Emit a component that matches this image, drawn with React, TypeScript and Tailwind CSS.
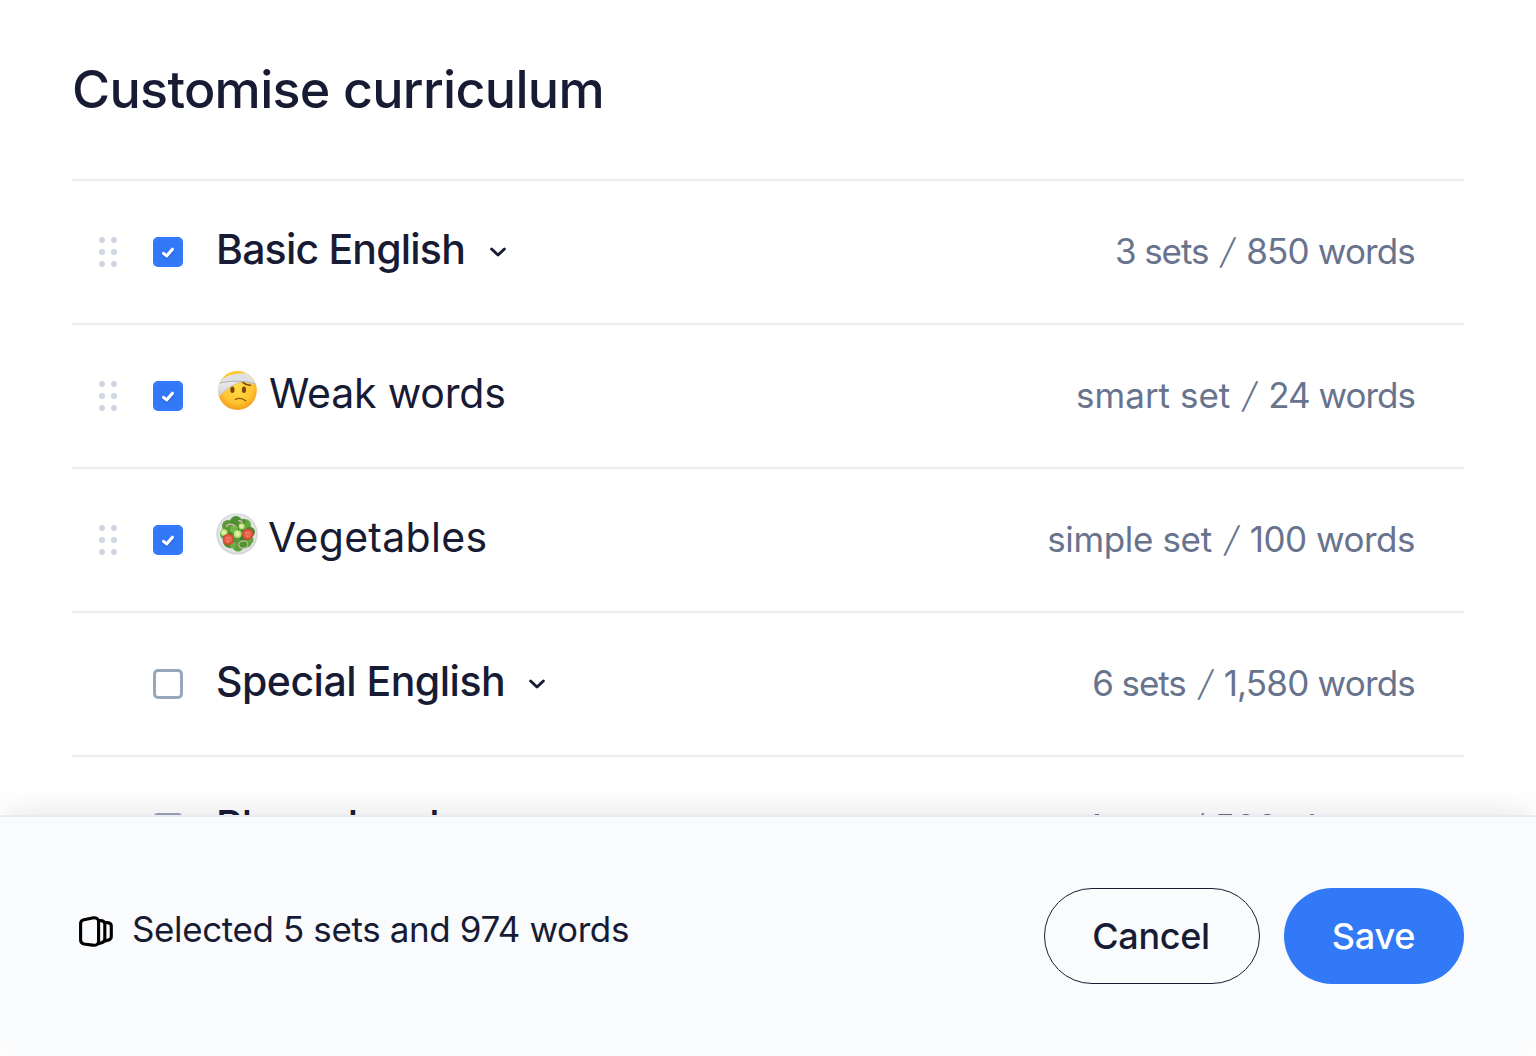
import type { ReactNode } from "react";

function Grip() {
  return (
    <svg width="20" height="32" viewBox="0 0 20 32" fill="#cfd6e2">
      {[4, 16, 28].map((y) => (
        <g key={y}>
          <circle cx="4" cy={y} r="3" />
          <circle cx="16" cy={y} r="3" />
        </g>
      ))}
    </svg>
  );
}

function Checkbox({ on }: { on: boolean }) {
  if (!on) {
    return <span className="block size-[30px] shrink-0 rounded-[5px] border-[3px] border-[#9aa6bc]" />;
  }
  return (
    <span className="block size-[30px] shrink-0 rounded-[5px] bg-[#3179f6]">
      <svg
        className="drop-shadow-[0_1px_1px_rgba(0,0,0,0.2)]"
        width="30"
        height="30"
        viewBox="0 0 30 30"
        fill="none"
        stroke="#fff"
        strokeWidth="3.1"
        strokeLinecap="round"
        strokeLinejoin="round"
      >
        <path d="M10.6 16.3 13.6 18.9 19.4 12.2" />
      </svg>
    </span>
  );
}

function Chevron() {
  return (
    <svg width="18" height="12" viewBox="0 0 18 12" fill="none" stroke="#181b34" strokeWidth="2.9" strokeLinecap="round" strokeLinejoin="round">
      <path d="M2.6 3 9 9 15.4 3" />
    </svg>
  );
}

function Bandaged() {
  return (
    <svg className="block" width="41" height="42" viewBox="0 0 41 42">
      <defs>
        <radialGradient id="face" cx="0.5" cy="0.4" r="0.62">
          <stop offset="0" stopColor="#ffdc45" />
          <stop offset="0.6" stopColor="#ffc630" />
          <stop offset="1" stopColor="#f08d17" />
        </radialGradient>
        <linearGradient id="wrap" x1="0" y1="0" x2="0.2" y2="1">
          <stop offset="0" stopColor="#ececed" />
          <stop offset="1" stopColor="#cfd0d3" />
        </linearGradient>
        <clipPath id="head">
          <circle cx="20.4" cy="20.5" r="19.4" />
        </clipPath>
      </defs>
      <g clipPath="url(#head)">
        <rect width="41" height="42" fill="url(#face)" />
        <path d="M0 14C6 6 18 2.5 31 3.4L41 16C33 12 24 11.4 14 12.6L0 19Z" fill="#dfe0e2" />
        <path d="M0 13C10 11 18 11.2 26 11.4C17 14 9 20 1.5 27.5L0 28Z" fill="url(#wrap)" />
        <path d="M2 13.2C14 10.4 28 10.4 40 14.4" stroke="#a9aaaf" strokeWidth="0.9" fill="none" />
        <path d="M3 25.5C10 18.5 17 14 25 11.6" stroke="#c08a2a" strokeOpacity="0.5" strokeWidth="0.7" fill="none" />
      </g>
      <ellipse cx="15.4" cy="19.8" rx="2.1" ry="3.2" fill="#7a4510" />
      <ellipse cx="27" cy="19.8" rx="2.1" ry="3.2" fill="#7a4510" />
      <path d="M26 12.6C28.5 14.6 31 15.4 33.4 15.2" stroke="#7a4510" strokeWidth="1.5" fill="none" strokeLinecap="round" />
      <path d="M18.4 29.4C21.5 28 25.6 28.2 28.6 30.8" stroke="#8a5310" strokeWidth="1.2" fill="none" strokeLinecap="round" />
    </svg>
  );
}

function Salad() {
  const leaves: [number, number, number, string][] = [
    [12, 13, 6, "#5a9a35"], [20, 9, 6, "#4c9030"], [29, 12, 6, "#63a63b"], [34, 19, 5, "#468a2c"],
    [9, 21, 5, "#57963a"], [14, 28, 7, "#4a8c30"], [22, 33, 5.5, "#5aa338"], [29, 28, 7, "#509532"],
    [21, 20, 9, "#549734"], [24, 15, 4, "#3f7f29"], [18, 16, 4, "#74b545"], [27, 24, 3.5, "#3f7f29"],
    [17, 32, 3, "#6fb043"], [34, 27, 3.5, "#63a63b"], [27, 8.5, 2.6, "#4c9030"], [14, 22, 2.6, "#3f7f29"],
  ];
  return (
    <svg className="block" width="42" height="42" viewBox="0 0 42 42">
      <circle cx="21" cy="21" r="20.8" fill="#d5d8da" />
      <circle cx="21" cy="20.6" r="19" fill="#e4e7e8" />
      <circle cx="21" cy="21" r="16.5" fill="#cfd6d1" />
      {leaves.map(([x, y, r, c], i) => (
        <circle key={i} cx={x} cy={y} r={r} fill={c} />
      ))}
      <path d="M10.4 14.2A4.4 3.8 0 0 1 18.8 13.6M22 8Q25 7 26.5 9.6" fill="none" stroke="#dfb3bd" strokeWidth="1.3" />
      <ellipse cx="27.3" cy="31.6" rx="4.6" ry="3.8" fill="none" stroke="#cfb8ae" strokeWidth="1.2" />
      {[[8, 19.6, 3.5], [21.6, 21, 4], [25.6, 13.4, 3.1]].map(([x, y, r]) => (
        <g key={x}>
          <circle cx={x} cy={y} r={r} fill="#b5dc72" />
          <circle cx={x} cy={y} r={r * 0.6} fill="#dff0a8" />
        </g>
      ))}
      {[[12.4, 26.4], [31.8, 21.3]].map(([x, y]) => (
        <g key={x}>
          <circle cx={x} cy={y} r="5.7" fill="#d94c38" />
          <circle cx={x} cy={y} r="3.8" fill="#e6634c" />
          <path d={`M${x - 2} ${y - 1.4}h1.4M${x + 1} ${y - 1.6}h1M${x - 1} ${y + 1.8}h1.6`} stroke="#f3a58f" strokeWidth="1.2" />
        </g>
      ))}
    </svg>
  );
}

function Deck() {
  return (
    <svg width="34" height="32" viewBox="0 0 34 32" fill="none" stroke="#000" strokeWidth="3.1" strokeLinecap="round" strokeLinejoin="round">
      <path d="M5 3.8 13.5 1.9Q19.6 1.2 19.6 6V25Q19.6 29.8 13.5 29.1L5 28Q1.6 27.2 1.6 24V7.6Q1.6 4.6 5 3.8Z" />
      <path d="M19.8 4.6H22Q25.8 4.8 25.8 8V23Q25.8 25.8 22.6 26.7L20 27.6" />
      <path d="M26 6.6H28.5Q32.3 6.8 32.3 10V20.6Q32.3 23.2 29.6 24L26.2 25" />
    </svg>
  );
}

type Row = {
  name: string;
  nameClass: string;
  checked: boolean;
  icon?: ReactNode;
  iconClass?: string;
  group?: boolean;
  kind: string;
  kindClass: string;
  count: string;
  countClass: string;
};

const rows: Row[] = [
  { name: "Basic English", nameClass: "font-medium tracking-[-0.8px] ml-[-1px] mr-px", checked: true, group: true, kind: "3 sets", kindClass: "tracking-[-1.1px]", count: "850 words", countClass: "tracking-[-0.85px]" },
  { name: "Weak words", nameClass: "tracking-[-0.2px] ml-[11px]", checked: true, icon: <Bandaged />, iconClass: "-mt-[11px]", kind: "smart set", kindClass: "tracking-[0px]", count: "24 words", countClass: "tracking-[-1px]" },
  { name: "Vegetables", nameClass: "tracking-[0.3px] ml-[10px]", checked: true, icon: <Salad />, iconClass: "-ml-px -mt-[12px]", kind: "simple set", kindClass: "tracking-[-0.35px]", count: "100 words", countClass: "tracking-[-0.5px]" },
  { name: "Special English", nameClass: "font-medium tracking-[-0.5px] ml-[-1px]", checked: false, group: true, kind: "6 sets", kindClass: "tracking-[-1.1px]", count: "1,580 words", countClass: "tracking-[-0.8px]" },
  { name: "Phrasal verbs", nameClass: "font-medium tracking-[-0.6px] ml-[-1px]", checked: false, group: true, kind: "4 sets", kindClass: "tracking-[-1.1px]", count: "500 phrases", countClass: "tracking-[-0.6px]" },
];

export default function App() {
  return (
    <main className="flex h-[1056px] w-[1536px] flex-col overflow-hidden bg-white font-['Inter',sans-serif] text-[#181b34]">
      <section className="min-h-0 flex-1 overflow-hidden px-[72px] pt-[58px]">
        <h1 className="mb-[57px] text-[52px] leading-[64px] font-medium tracking-[-0.68px] whitespace-nowrap">Customise curriculum</h1>
        <ul>
          {rows.map((row) => (
            <li key={row.name} className="flex h-[144px] items-center border-t-2 border-[#ebedf0] pr-12 pl-[26px]">
              <span className="w-[55px] shrink-0">{row.checked && <Grip />}</span>
              <Checkbox on={row.checked} />
              <div className="ml-[34px] flex items-center">
                {row.icon && <span className={row.iconClass}>{row.icon}</span>}
                <span className={`-mt-[7px] text-[41px] leading-[52px] whitespace-nowrap ${row.nameClass}`}>{row.name}</span>
                {row.group && <span className="ml-[23px] flex"><Chevron /></span>}
              </div>
              <div className="-mt-[2px] mr-px ml-auto flex text-[35px] leading-[48px] whitespace-nowrap text-[#68738d]">
                <span className={row.kindClass}>{row.kind}</span>
                <span className="mr-[8px] ml-[10px] w-[20px] -skew-x-[12deg] text-center font-light">/</span>
                <span className={row.countClass}>{row.count}</span>
              </div>
            </li>
          ))}
        </ul>
      </section>
      <footer className="relative flex h-[241px] shrink-0 items-center rounded-b-[24px] border-t-2 border-[#e9ebf1] bg-[#fafbfd] px-[72px] pb-[2px] shadow-[0_-8px_32px_-8px_rgba(24,27,52,0.13)]">
        <span className="-mt-[8px] ml-[7px]"><Deck /></span>
        <p className="-mt-[13px] ml-[19px] text-[35px] leading-[48px] tracking-[-0.39px] whitespace-nowrap">Selected 5 sets and 974 words</p>
        <div className="ml-auto flex gap-6 text-[36px] font-medium">
          <button className="flex h-24 w-[216px] items-center justify-center rounded-full border-[1.5px] border-[#181b34] pt-[1px] pr-[2px] tracking-[-0.3px]">Cancel</button>
          <button className="flex h-24 w-[180px] items-center justify-center rounded-full bg-[#3179f6] pt-[1px] pr-[1px] tracking-[-0.2px] text-white">Save</button>
        </div>
      </footer>
    </main>
  );
}
